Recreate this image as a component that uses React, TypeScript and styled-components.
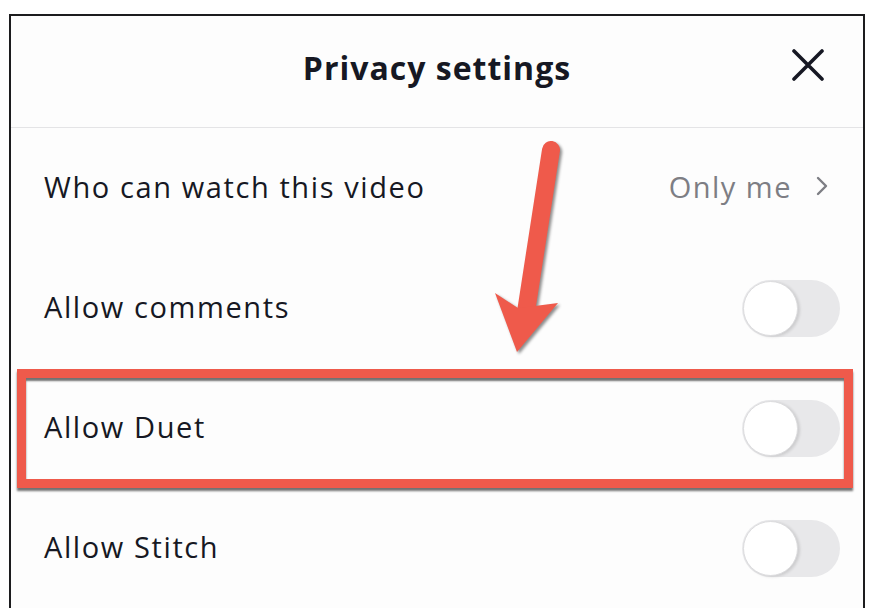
import React from "react";
import styled, { createGlobalStyle } from "styled-components";

const Global = createGlobalStyle`
  html, body { margin: 0; padding: 0; background: #ffffff; }
  body { font-family: "Open Sans", "Lato", sans-serif; -webkit-font-smoothing: antialiased; }
`;

const Page = styled.div`
  padding: 14px 4px 0 9px;
  height: 610px;
  box-sizing: border-box;
  overflow: hidden;
`;

const Panel = styled.div`
  position: relative;
  width: 856px;
  box-sizing: border-box;
  border: 2px solid #1c1c1e;
  border-bottom: none;
  background: #fdfdfd;
`;

const Header = styled.div`
  position: relative;
  height: 112px;
  display: flex;
  align-items: center;
  justify-content: center;
  padding-bottom: 8px;
  box-sizing: border-box;
  border-bottom: 1px solid #e4e4e6;
`;

const Title = styled.h1`
  margin: 0;
  font-size: 32px;
  font-weight: 700;
  color: #161823;
  letter-spacing: 1px;
`;

const CloseButton = styled.button`
  position: absolute;
  right: 38px;
  top: 32px;
  width: 34px;
  height: 34px;
  padding: 0;
  border: none;
  background: transparent;
  display: flex;
  align-items: center;
  justify-content: center;
`;

const Row = styled.div`
  height: 120px;
  display: flex;
  align-items: center;
  justify-content: space-between;
  padding: 0 23px 0 33px;
`;

const Label = styled.span`
  font-size: 29px;
  color: #161823;
  letter-spacing: 1.6px;
  margin-top: -4px;
`;

const Value = styled.span`
  display: flex;
  align-items: center;
  gap: 24px;
  font-size: 29px;
  color: #7d7e84;
  letter-spacing: 1.5px;
  padding-right: 12px;
  margin-top: -4px;
`;

const Track = styled.div`
  width: 98px;
  height: 57px;
  border-radius: 29px;
  background: #e8e8ea;
  display: flex;
  align-items: center;
  padding-left: 1px;
  box-sizing: border-box;
`;

const Knob = styled.div`
  width: 55px;
  height: 55px;
  border-radius: 50%;
  background: #ffffff;
  border: 1px solid #dcdcde;
  box-sizing: border-box;
  box-shadow: 2px 1px 3px rgba(0, 0, 0, 0.12);
`;

const Highlight = styled.div`
  position: absolute;
  left: 6px;
  top: 353px;
  width: 836px;
  height: 119px;
  box-sizing: border-box;
  border: 9px solid #ef5a4b;
  box-shadow: 0 3px 2px rgba(0, 0, 0, 0.55), inset 0 3px 2px rgba(0, 0, 0, 0.55);
  pointer-events: none;
`;

const ArrowSvg = styled.svg`
  position: absolute;
  left: 469px;
  top: 114px;
  overflow: visible;
  filter: drop-shadow(2px 2px 1.5px rgba(0, 0, 0, 0.45));
  pointer-events: none;
`;

const Toggle = () => (
  <Track>
    <Knob />
  </Track>
);

export default function App() {
  return (
    <>
      <Global />
      <Page>
        <Panel>
          <Header>
            <Title>Privacy settings</Title>
            <CloseButton aria-label="Close">
              <svg width="32" height="32" viewBox="0 0 32 32">
                <path d="M2 2 L30 30 M30 2 L2 30" stroke="#161823" strokeWidth="3.6" strokeLinecap="round" />
              </svg>
            </CloseButton>
          </Header>
          <Row>
            <Label>Who can watch this video</Label>
            <Value>
              Only me
              <svg width="12" height="20" viewBox="0 0 12 20">
                <path d="M2 2 L10 10 L2 18" fill="none" stroke="#7d7e84" strokeWidth="2.4" strokeLinecap="round" strokeLinejoin="round" />
              </svg>
            </Value>
          </Row>
          <Row>
            <Label>Allow comments</Label>
            <Toggle />
          </Row>
          <Row>
            <Label>Allow Duet</Label>
            <Toggle />
          </Row>
          <Row>
            <Label>Allow Stitch</Label>
            <Toggle />
          </Row>
          <Highlight />
          <ArrowSvg width="120" height="250" viewBox="480 130 120 250">
            <line x1="551" y1="150" x2="526" y2="312" stroke="#ef5a4b" strokeWidth="18" strokeLinecap="round" />
            <polygon points="495,293 518,308 535,306 558,303 517,352" fill="#ef5a4b" />
          </ArrowSvg>
        </Panel>
      </Page>
    </>
  );
}
